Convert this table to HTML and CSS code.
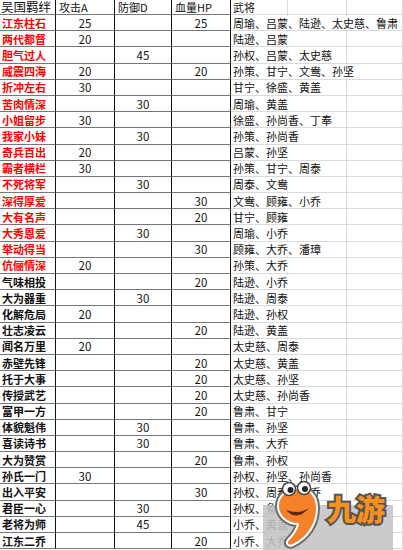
FILE: index.html
```html
<!DOCTYPE html>
<html lang="zh-CN">
<head>
<meta charset="utf-8">
<title>吴国羁绊</title>
<link rel="stylesheet" href="styles.css">
</head>
<body>
<div class="sheet">
  <div class="row head"><div class="c c1 h1">吴国羁绊</div><div class="c c2 hl">攻击A</div><div class="c c3 hl">防御D</div><div class="c c4 hl">血量HP</div><div class="c c5"><span>武将</span></div><div class="c c6"></div><div class="c c7"></div></div>
  <div class="row red"><div class="c c1">江东柱石</div><div class="c c2">25</div><div class="c c3"></div><div class="c c4">25</div><div class="c c5"><span>周瑜、吕蒙、陆逊、太史慈、鲁肃</span></div><div class="c c6"></div><div class="c c7"></div></div>
  <div class="row red"><div class="c c1">两代都督</div><div class="c c2">20</div><div class="c c3"></div><div class="c c4"></div><div class="c c5"><span>陆逊、吕蒙</span></div><div class="c c6"></div><div class="c c7"></div></div>
  <div class="row red"><div class="c c1">胆气过人</div><div class="c c2"></div><div class="c c3">45</div><div class="c c4"></div><div class="c c5"><span>孙权、吕蒙、太史慈</span></div><div class="c c6"></div><div class="c c7"></div></div>
  <div class="row red"><div class="c c1">威震四海</div><div class="c c2">20</div><div class="c c3"></div><div class="c c4">20</div><div class="c c5"><span>孙策、甘宁、文鸯、孙坚</span></div><div class="c c6"></div><div class="c c7"></div></div>
  <div class="row red"><div class="c c1">折冲左右</div><div class="c c2">30</div><div class="c c3"></div><div class="c c4"></div><div class="c c5"><span>甘宁、徐盛、黄盖</span></div><div class="c c6"></div><div class="c c7"></div></div>
  <div class="row red"><div class="c c1">苦肉情深</div><div class="c c2"></div><div class="c c3">30</div><div class="c c4"></div><div class="c c5"><span>周瑜、黄盖</span></div><div class="c c6"></div><div class="c c7"></div></div>
  <div class="row red"><div class="c c1">小姐留步</div><div class="c c2">30</div><div class="c c3"></div><div class="c c4"></div><div class="c c5"><span>徐盛、孙尚香、丁奉</span></div><div class="c c6"></div><div class="c c7"></div></div>
  <div class="row red"><div class="c c1">我家小妹</div><div class="c c2"></div><div class="c c3">30</div><div class="c c4"></div><div class="c c5"><span>孙策、孙尚香</span></div><div class="c c6"></div><div class="c c7"></div></div>
  <div class="row red"><div class="c c1">奇兵百出</div><div class="c c2">20</div><div class="c c3"></div><div class="c c4"></div><div class="c c5"><span>吕蒙、孙坚</span></div><div class="c c6"></div><div class="c c7"></div></div>
  <div class="row red"><div class="c c1">霸者横栏</div><div class="c c2">30</div><div class="c c3"></div><div class="c c4"></div><div class="c c5"><span>孙策、甘宁、周泰</span></div><div class="c c6"></div><div class="c c7"></div></div>
  <div class="row red"><div class="c c1">不死将军</div><div class="c c2"></div><div class="c c3">30</div><div class="c c4"></div><div class="c c5"><span>周泰、文鸯</span></div><div class="c c6"></div><div class="c c7"></div></div>
  <div class="row red"><div class="c c1">深得厚爱</div><div class="c c2"></div><div class="c c3"></div><div class="c c4">30</div><div class="c c5"><span>文鸯、顾雍、小乔</span></div><div class="c c6"></div><div class="c c7"></div></div>
  <div class="row red"><div class="c c1">大有名声</div><div class="c c2"></div><div class="c c3"></div><div class="c c4">20</div><div class="c c5"><span>甘宁、顾雍</span></div><div class="c c6"></div><div class="c c7"></div></div>
  <div class="row red"><div class="c c1">大秀恩爱</div><div class="c c2"></div><div class="c c3">30</div><div class="c c4"></div><div class="c c5"><span>周瑜、小乔</span></div><div class="c c6"></div><div class="c c7"></div></div>
  <div class="row red"><div class="c c1">举动得当</div><div class="c c2"></div><div class="c c3"></div><div class="c c4">30</div><div class="c c5"><span>顾雍、大乔、潘璋</span></div><div class="c c6"></div><div class="c c7"></div></div>
  <div class="row red"><div class="c c1">伉俪情深</div><div class="c c2">20</div><div class="c c3"></div><div class="c c4"></div><div class="c c5"><span>孙策、大乔</span></div><div class="c c6"></div><div class="c c7"></div></div>
  <div class="row"><div class="c c1">气味相投</div><div class="c c2"></div><div class="c c3"></div><div class="c c4">20</div><div class="c c5"><span>陆逊、小乔</span></div><div class="c c6"></div><div class="c c7"></div></div>
  <div class="row"><div class="c c1">大为器重</div><div class="c c2"></div><div class="c c3">30</div><div class="c c4"></div><div class="c c5"><span>陆逊、周泰</span></div><div class="c c6"></div><div class="c c7"></div></div>
  <div class="row"><div class="c c1">化解危局</div><div class="c c2">20</div><div class="c c3"></div><div class="c c4"></div><div class="c c5"><span>陆逊、孙权</span></div><div class="c c6"></div><div class="c c7"></div></div>
  <div class="row"><div class="c c1">壮志凌云</div><div class="c c2"></div><div class="c c3"></div><div class="c c4">20</div><div class="c c5"><span>陆逊、黄盖</span></div><div class="c c6"></div><div class="c c7"></div></div>
  <div class="row"><div class="c c1">闻名万里</div><div class="c c2">20</div><div class="c c3"></div><div class="c c4"></div><div class="c c5"><span>太史慈、周泰</span></div><div class="c c6"></div><div class="c c7"></div></div>
  <div class="row"><div class="c c1">赤壁先锋</div><div class="c c2"></div><div class="c c3"></div><div class="c c4">20</div><div class="c c5"><span>太史慈、黄盖</span></div><div class="c c6"></div><div class="c c7"></div></div>
  <div class="row"><div class="c c1">托于大事</div><div class="c c2"></div><div class="c c3"></div><div class="c c4">20</div><div class="c c5"><span>太史慈、孙坚</span></div><div class="c c6"></div><div class="c c7"></div></div>
  <div class="row"><div class="c c1">传授武艺</div><div class="c c2"></div><div class="c c3"></div><div class="c c4">20</div><div class="c c5"><span>太史慈、孙尚香</span></div><div class="c c6"></div><div class="c c7"></div></div>
  <div class="row"><div class="c c1">富甲一方</div><div class="c c2"></div><div class="c c3"></div><div class="c c4">20</div><div class="c c5"><span>鲁肃、甘宁</span></div><div class="c c6"></div><div class="c c7"></div></div>
  <div class="row"><div class="c c1">体貌魁伟</div><div class="c c2"></div><div class="c c3">30</div><div class="c c4"></div><div class="c c5"><span>鲁肃、孙坚</span></div><div class="c c6"></div><div class="c c7"></div></div>
  <div class="row"><div class="c c1">喜读诗书</div><div class="c c2"></div><div class="c c3">30</div><div class="c c4"></div><div class="c c5"><span>鲁肃、大乔</span></div><div class="c c6"></div><div class="c c7"></div></div>
  <div class="row"><div class="c c1">大为赞赏</div><div class="c c2"></div><div class="c c3"></div><div class="c c4">20</div><div class="c c5"><span>鲁肃、孙权</span></div><div class="c c6"></div><div class="c c7"></div></div>
  <div class="row"><div class="c c1">孙氏一门</div><div class="c c2">30</div><div class="c c3"></div><div class="c c4"></div><div class="c c5"><span>孙权、孙坚、孙尚香</span></div><div class="c c6"></div><div class="c c7"></div></div>
  <div class="row"><div class="c c1">出入平安</div><div class="c c2"></div><div class="c c3"></div><div class="c c4">30</div><div class="c c5"><span>孙权、周泰、小乔</span></div><div class="c c6"></div><div class="c c7"></div></div>
  <div class="row"><div class="c c1">君臣一心</div><div class="c c2"></div><div class="c c3">30</div><div class="c c4"></div><div class="c c5"><span>孙权、鲁肃</span></div><div class="c c6"></div><div class="c c7"></div></div>
  <div class="row"><div class="c c1">老将为师</div><div class="c c2"></div><div class="c c3">45</div><div class="c c4"></div><div class="c c5"><span>小乔、黄盖</span></div><div class="c c6"></div><div class="c c7"></div></div>
  <div class="row"><div class="c c1">江东二乔</div><div class="c c2"></div><div class="c c3"></div><div class="c c4">20</div><div class="c c5"><span>小乔、大乔</span></div><div class="c c6"></div><div class="c c7"></div></div>
</div>

<div class="wm">
  <div class="wm-box"></div>
  <svg class="wm-logo" width="62" height="72" viewBox="0 0 62 72">
    <path d="M35 10 C47 10 54 18 54 30 C54 46 45 60 30 67 C26 69 22 66 25 62 C31 56 34 51 35 46 C24 46 15 38 15 28 C15 18 24 10 35 10 Z" fill="none" stroke="#6b6b6b" stroke-width="6" stroke-linejoin="round"/>
    <path d="M35 10 C47 10 54 18 54 30 C54 46 45 60 30 67 C26 69 22 66 25 62 C31 56 34 51 35 46 C24 46 15 38 15 28 C15 18 24 10 35 10 Z" fill="#f5822a" stroke="#ffffff" stroke-width="2" stroke-linejoin="round"/>
    <path d="M23 32 Q34 44 46 30 Q36 37 23 32 Z" fill="#5b2a10"/>
    <circle cx="26" cy="11" r="6.5" fill="#fff" stroke="#444" stroke-width="1.5"/>
    <circle cx="41" cy="10" r="6.5" fill="#fff" stroke="#444" stroke-width="1.5"/>
    <circle cx="27.5" cy="12" r="3" fill="#222"/>
    <circle cx="42" cy="11" r="3" fill="#222"/>
  </svg>
  <div class="wm-text">九游</div>
</div>
</body>
</html>
```
FILE: styles.css
```css
html, body {
  margin: 0;
  padding: 0;
  background: #ffffff;
}
body {
  width: 403px;
  height: 550px;
  overflow: hidden;
  position: relative;
  font-family: "Noto Sans CJK SC", "Noto Sans", sans-serif;
  color: #111;
}
.sheet {
  display: flex;
  flex-direction: column;
}
.row {
  display: grid;
  grid-template-columns: 56px 59px 57px 59px 57px 59px 56px;
  height: 16.2px;
}
.row.head {
  height: 15px;
}
.c {
  box-sizing: border-box;
  border-right: 1px solid #111;
  border-bottom: 1px solid #777;
  font-size: 11.5px;
  line-height: 14px;
  text-align: center;
  white-space: nowrap;
  overflow: visible;
  display: flex;
  align-items: center;
  justify-content: center;
}
.c1 {
  justify-content: flex-start;
  padding-left: 2px;
  font-weight: 700;
  font-size: 11px;
  color: #111;
}
.red .c1 {
  color: #ff0000;
}
.h1 {
  font-weight: 400;
  font-size: 12.5px;
  line-height: 14px;
  padding-left: 1px;
}
.hl {
  justify-content: flex-start;
  padding-left: 3px;
  font-size: 11px;
}
.c5, .c6, .c7 {
  border-right: 1px solid #dadada;
  border-bottom: 1px solid #dadada;
}
.c5 {
  justify-content: flex-start;
  padding-left: 2px;
  font-size: 11px;
}
.c5 span {
  position: relative;
  z-index: 1;
  background: #ffffff;
  display: inline-block;
  height: 14px;
  line-height: 14px;
  padding-right: 1px;
}
.wm {
  position: absolute;
  left: 263px;
  top: 478px;
  width: 130px;
  height: 72px;
  z-index: 5;
}
.wm-box {
  position: absolute;
  left: 0;
  top: 27px;
  width: 130px;
  height: 45px;
  background: rgba(196, 196, 196, 0.88);
}
.wm-logo {
  position: absolute;
  left: 0;
  top: 0;
}
.wm-text {
  position: absolute;
  left: 64px;
  top: 12px;
  font-family: "Noto Sans CJK SC", sans-serif;
  font-weight: 900;
  font-size: 29px;
  line-height: 36px;
  color: #f7901e;
  -webkit-text-stroke: 4px #555;
  paint-order: stroke fill;
}
```
